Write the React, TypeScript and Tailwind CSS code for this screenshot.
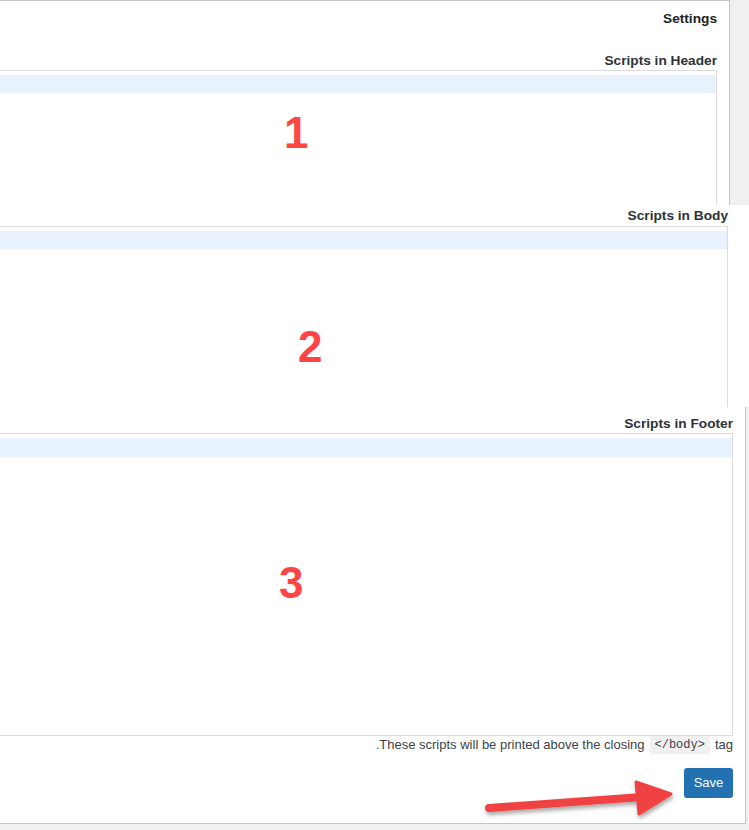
export default function App() {
  const label = "text-[13.7px] leading-[16px] font-bold text-[#2c3338]";
  return (
    <div className="relative w-[749px] h-[830px] overflow-hidden bg-[#f0f0f1] font-['Liberation_Sans',Arial,sans-serif]">
      {/* part 1 */}
      <section className="h-[205px] w-[730px] bg-white border-t border-r border-[#c3c4c7] pr-[12px] flex flex-col items-end overflow-hidden">
        <h2 className="mt-[10px] text-[13.7px] leading-[16px] font-bold text-[#1d2327]">Settings</h2>
        <div className={`mt-[26px] ${label}`}>Scripts in Header</div>
        <div className="mt-[1px] w-full flex-1 border-t border-r border-[#dcdcde] pt-[4px]">
          <div className="h-[18px] bg-[#e8f2fe]" />
        </div>
      </section>

      {/* part 2 */}
      <section className="h-[202px] w-full bg-white pr-[21px] flex flex-col items-end overflow-hidden">
        <div className={`mt-[3px] ${label}`}>Scripts in Body</div>
        <div className="mt-[2px] w-full flex-1 border-t border-r border-[#dcdcde] pt-[4px]">
          <div className="h-[18px] bg-[#e8f2fe]" />
        </div>
      </section>

      {/* part 3 */}
      <section className="h-[417px] w-[746px] bg-white border-r border-b border-[#c3c4c7] pr-[12px] flex flex-col items-end">
        <div className={`mt-[9px] ${label}`}>Scripts in Footer</div>
        <div className="mt-[1px] w-full h-[303px] border-t border-r border-b border-[#dcdcde] pt-[4px]">
          <div className="h-[19px] bg-[#e8f2fe]" />
        </div>
        <p className="flex items-center text-[13px] leading-[18px] text-[#3c434a]">
          <span>.These scripts will be printed above the closing</span>
          <code className="ml-[5px] mr-[5px] px-[5px] bg-[#f0f0f1] font-['Liberation_Mono',monospace] text-[12px] leading-[18px] text-[#3c434a]">
            &lt;/body&gt;
          </code>
          <span>tag</span>
        </p>
        <button className="mt-[14px] h-[30px] w-[49px] rounded-[3px] bg-[#2271b1] text-[13px] text-white">
          Save
        </button>
      </section>

      {/* annotations */}
      <span className="absolute left-[284px] top-[110px] text-[44px] leading-[46px] font-bold text-[#ff4444]">1</span>
      <span className="absolute left-[298px] top-[324px] text-[44px] leading-[46px] font-bold text-[#ff4444]">2</span>
      <span className="absolute left-[279px] top-[560px] text-[44px] leading-[46px] font-bold text-[#ff4444]">3</span>

      <svg className="absolute left-0 top-0 pointer-events-none" width="749" height="830">
        <defs>
          <filter id="sh" x="-20%" y="-50%" width="140%" height="200%">
            <feDropShadow dx="1" dy="3" stdDeviation="2" floodColor="#000" floodOpacity="0.35" />
          </filter>
        </defs>
        <g filter="url(#sh)" fill="#f04343">
          <line x1="489" y1="808" x2="642" y2="797" stroke="#f04343" strokeWidth="8" strokeLinecap="round" />
          <polygon points="636,782 671,794 639,814" strokeLinejoin="round" stroke="#f04343" strokeWidth="3" />
        </g>
      </svg>
    </div>
  );
}
